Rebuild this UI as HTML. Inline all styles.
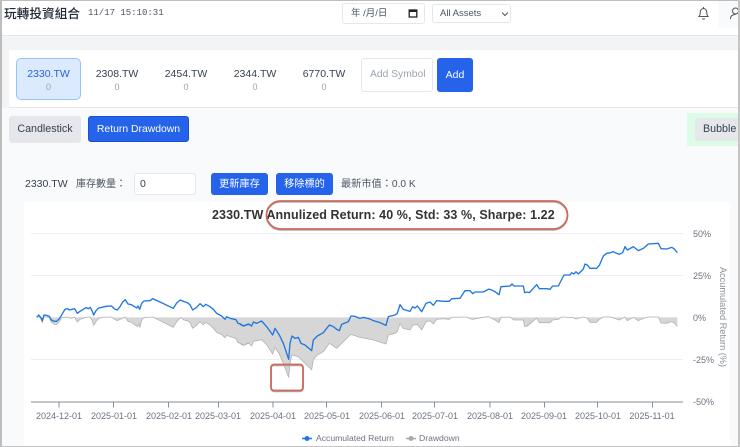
<!DOCTYPE html>
<html><head><meta charset="utf-8"><style>
*{box-sizing:border-box}
html,body{margin:0;padding:0}
body{width:740px;height:447px;position:relative;overflow:hidden;background:#f9fafb;font-family:"Liberation Sans","Noto Sans CJK TC",sans-serif;color:#374151}
.a{position:absolute;white-space:nowrap}
.btn{background:#2563eb;color:#fff;border-radius:3px;text-align:center;font-size:10.500px}
.sym{position:absolute;top:58px;width:64px;height:42px;text-align:center;font-size:10.500px;padding-top:10px;line-height:13px;color:#374151}
.sym small{display:block;font-size:9px;line-height:13px;color:#9ca3af}
.tk{font-size:9px;color:#6b7280;top:411px;transform:translateX(-50%)}
.yl{font-size:9px;line-height:11px;color:#6b7280;left:693px}
</style></head><body>
<div class="a" style="left:0;top:35px;width:740px;height:15px;background:#f3f4f6"></div>
<div class="a" style="left:0;top:50px;width:9px;height:58px;background:#f3f4f6"></div>
<div class="a" style="left:0;top:0;width:740px;height:36px;background:#fff;border-bottom:1px solid #e5e7eb"></div>
<div class="a" style="left:4px;top:4px;font-size:12.700px;line-height:20px;color:#1f2937;font-weight:500">玩轉投資組合</div>
<div class="a" style="left:88px;top:7px;font:9px/13px 'Liberation Mono',monospace;color:#4b5563">11/17 15:10:31</div>
<div class="a" style="left:342px;top:3px;width:83px;height:21px;background:#fff;border:1px solid #e5e7eb;border-radius:3px;font-size:9.500px;line-height:19px;padding-left:8px;color:#4b5563">年 /月/日</div>
<svg class="a" style="left:408px;top:8px" width="11" height="11" viewBox="0 0 11 11"><rect x="1.200" y="2" width="7.600" height="7" fill="none" stroke="#222" stroke-width="1.300"/><rect x="1" y="1.500" width="8" height="2.500" fill="#222"/></svg>
<div class="a" style="left:432px;top:4px;width:79px;height:19px;background:#fff;border:1px solid #e5e7eb;border-radius:3px;font-size:9.500px;line-height:17px;padding-left:7px;color:#4b5563">All Assets</div>
<svg class="a" style="left:501px;top:11px" width="8" height="6" viewBox="0 0 8 6"><path d="M1 1.500 4 4.500 7 1.500" fill="none" stroke="#4b5563" stroke-width="1"/></svg>
<svg class="a" style="left:697px;top:6px" width="13" height="15" viewBox="0 0 13 15"><path d="M2 10.500c1-1 1.200-2 1.200-4 0-2.200 1.300-4 3.300-4s3.300 1.800 3.300 4c0 2 .2 3 1.200 4zM5.200 12.500c.4.800 2.200.8 2.600 0M6.500 1v1.500" fill="none" stroke="#4b5563" stroke-width="1"/></svg>
<div class="a" style="left:718px;top:0;width:22px;height:28px;background:#f9fafb"></div>
<svg class="a" style="left:730px;top:6px" width="10" height="15" viewBox="0 0 10 15"><circle cx="5.500" cy="5" r="3" fill="none" stroke="#4b5563" stroke-width="1"/><path d="M0.500 13c0-3 2-4.500 5-4.500" fill="none" stroke="#4b5563" stroke-width="1"/></svg>

<div class="a" style="left:9px;top:50px;width:731px;height:58px;background:#fff;border-bottom:1px solid #e5e7eb"></div>
<div class="a" style="left:16px;top:58px;width:65px;height:42px;background:#dbeafe;border:1px solid #93c5fd;border-radius:5px"></div>
<div class="sym" style="left:16px;color:#2563eb;width:65px">2330.TW<small>0</small></div>
<div class="sym" style="left:85px">2308.TW<small>0</small></div>
<div class="sym" style="left:154px">2454.TW<small>0</small></div>
<div class="sym" style="left:223px">2344.TW<small>0</small></div>
<div class="sym" style="left:292px">6770.TW<small>0</small></div>
<div class="a" style="left:361px;top:58px;width:72px;height:34px;background:#fff;border:1px solid #e5e7eb;border-radius:3px;font-size:10.300px;line-height:32px;padding-left:8px;color:#9ca3af;overflow:hidden">Add Symbol</div>
<div class="a btn" style="left:437px;top:58px;width:36px;height:34px;line-height:34px">Add</div>

<div class="a" style="left:9px;top:116px;width:72px;height:27px;background:#e5e7eb;border-radius:3px;font-size:10.700px;line-height:27px;text-align:center;color:#374151">Candlestick</div>
<div class="a btn" style="left:88px;top:116px;width:101px;height:26px;line-height:26px;font-size:10.400px;border:1px solid #1d4ed8">Return Drawdown</div>
<div class="a" style="left:687px;top:113px;width:53px;height:33px;background:#dcfce7"></div>
<div class="a" style="left:695px;top:118px;width:45px;height:23px;background:#e5e7eb;border-radius:3px 0 0 3px;font-size:10.700px;line-height:23px;padding-left:8px;color:#374151">Bubble</div>

<div class="a" style="left:25px;top:177px;font-size:10.500px;line-height:14px;color:#374151">2330.TW</div>
<div class="a" style="left:76px;top:178px;font-size:10px;line-height:14px;color:#4b5563">庫存數量：</div>
<div class="a" style="left:134px;top:173px;width:62px;height:22px;background:#fff;border:1px solid #e5e7eb;border-radius:3px;font-size:10.500px;line-height:20px;padding-left:5px;color:#374151">0</div>
<div class="a btn" style="left:211px;top:173px;width:57px;height:22px;line-height:23px;font-size:10.200px">更新庫存</div>
<div class="a btn" style="left:276px;top:173px;width:57px;height:22px;line-height:23px;font-size:10.200px">移除標的</div>
<div class="a" style="left:341px;top:178px;font-size:10.200px;line-height:14px;color:#4b5563">最新市值：0.0 K</div>

<div class="a" style="left:24px;top:202px;width:706px;height:245px;background:#fff"></div>
<div class="a" style="left:212px;top:207px;font-size:12.500px;line-height:16px;font-weight:bold;color:#333;letter-spacing:.09px">2330.TW Annulized Return: 40 %, Std: 33 %, Sharpe: 1.22</div>

<svg class="a" style="left:0;top:0" width="740" height="447">
<g stroke="#eceef1" stroke-width="1"><path d="M31 233.500H683M31 275.500H683M31 359.500H683"/></g>
<path d="M31 402H683" stroke="#8a8f96" stroke-width="1"/>
<path d="M59 402v5.500M113.500 402v5.500M168.500 402v5.500M218.500 402v5.500M273 402v5.500M326.500 402v5.500M381.500 402v5.500M434.500 402v5.500M490 402v5.500M544.500 402v5.500M597.500 402v5.500M652.500 402v5.500" stroke="#8a8f96" stroke-width="1"/>
<g transform="translate(0,200) scale(.33333)" stroke-linejoin="round">
<polygon fill="#d6d6d6" points="110,352 116,350 122,355 127,368 132,350 148,352 154,367 163,373 170,373 178,365 186,352 206,352 212,355 224,352 232,366 240,358 258,352 270,351 276,360 281,376 288,365 296,355 306,352 334,351 344,358 352,362 360,358 376,351 384,364 394,367 404,374 412,380 416,372 420,382 425,360 432,353 458,351 480,362 520,382 530,365 541,353 552,360 562,362 570,368 578,385 590,376 600,365 610,374 617,367 630,375 640,385 650,397 665,404 675,413 680,406 708,416 714,428 722,430 730,436 745,430 750,430 750,352"/>
<polyline fill="none" stroke="#b4b4b4" stroke-width="2.500" points="110,352 116,350 122,355 127,368 132,350 148,352 154,367 163,373 170,373 178,365 186,352 206,352 212,355 224,352 232,366 240,358 258,352 270,351 276,360 281,376 288,365 296,355 306,352 334,351 344,358 352,362 360,358 376,351 384,364 394,367 404,374 412,380 416,372 420,382 425,360 432,353 458,351 480,362 520,382 530,365 541,353 552,360 562,362 570,368 578,385 590,376 600,365 610,374 617,367 630,375 640,385 650,397 665,404 675,413 680,406 708,416 714,428 722,430 730,436 745,430 750,430"/>
<polyline fill="none" stroke="#1f77e0" stroke-width="4" points="110,352 116,345 122,352 127,362 132,345 140,346 148,349 154,360 163,364 170,364 178,356 186,343 195,328 203,326 208,330 216,328 224,326 232,340 240,334 250,328 258,323 265,326 271,322 276,332 281,345 288,332 296,324 306,322 318,319 334,318 344,327 352,330 360,320 368,306 376,299 384,312 394,314 404,320 410,324 414,318 419,328 425,310 432,303 450,302 458,296 480,306 520,325 530,309 541,300 552,305 562,308 570,314 578,330 590,322 600,311 610,320 617,313 630,320 640,328 650,340 665,348 675,358 680,350 690,355 708,359 714,370 722,372 730,378 745,373 750,374"/>
</g>
<g transform="translate(240,200) scale(.33333)" stroke-linejoin="round">
<polygon fill="#d6d6d6" points="30,352 30,428 35,438 40,424 65,419 80,434 98,462 105,442 118,462 130,490 146,532 150,490 156,465 175,470 195,490 215,510 220,478 232,465 250,455 268,430 290,445 305,430 325,410 333,403 360,412 400,420 438,432 445,405 465,400 472,395 480,370 490,385 510,390 518,376 532,373 545,390 558,365 570,362 580,372 590,358 610,356 628,358 635,352 680,351 690,356 698,358 730,352 745,350 750,352"/>
<polyline fill="none" stroke="#b4b4b4" stroke-width="2.500" points="0,431 10,436 25,428 35,438 40,424 65,419 80,434 98,462 105,442 118,462 130,490 146,532 150,490 156,465 175,470 195,490 215,510 220,478 232,465 250,455 268,430 290,445 305,430 325,410 333,403 360,412 400,420 438,432 445,405 465,400 472,395 480,370 490,385 510,390 518,376 532,373 545,390 558,365 570,362 580,372 590,358 610,356 628,358 635,352 680,351 690,356 698,358 730,352 745,350 750,352"/>
<polyline fill="none" stroke="#1f77e0" stroke-width="4" points="0,373 10,378 25,372 35,378 40,366 50,370 65,363 80,380 98,405 105,385 118,405 130,430 146,478 150,430 156,408 165,415 175,412 183,430 195,435 215,452 220,420 232,408 250,398 268,375 280,380 290,388 298,392 305,373 325,365 333,348 345,349 360,355 370,352 390,357 400,362 420,368 438,376 445,350 465,345 472,340 480,314 490,328 510,334 518,320 525,324 532,318 545,335 558,310 570,306 580,316 590,302 610,304 628,304 635,296 660,295 675,272 690,272 698,281 705,276 730,276 745,268 750,268"/>
</g>
<g transform="translate(490,200) scale(.33333)" stroke-linejoin="round">
<polygon fill="#d6d6d6" points="0,352 15,360 27,368 33,352 60,351 72,360 100,360 104,380 112,378 140,354 148,368 180,368 188,360 205,358 215,351 250,353 258,357 280,351 292,355 300,367 320,367 328,358 340,351 362,351 388,360 405,351 412,362 430,352 445,362 460,355 475,351 505,351 513,369 530,370 545,365 552,368 562,380 562,352"/>
<polyline fill="none" stroke="#b4b4b4" stroke-width="2.500" points="0,352 15,360 27,368 33,352 60,351 72,360 100,360 104,380 112,378 140,354 148,368 180,368 188,360 205,358 215,351 250,353 258,357 280,351 292,355 300,367 320,367 328,358 340,351 362,351 388,360 405,351 412,362 430,352 445,362 460,355 475,351 505,351 513,369 530,370 545,365 552,368 562,380"/>
<polyline fill="none" stroke="#1f77e0" stroke-width="4" points="0,268 15,275 27,284 33,260 60,258 66,252 72,258 100,258 104,278 112,276 118,278 140,254 148,266 170,266 180,268 188,258 205,258 222,225 240,225 245,218 252,222 258,215 265,222 280,207 285,192 292,195 300,205 320,205 328,196 340,168 350,160 362,158 368,155 388,163 398,158 405,140 412,150 430,140 445,152 460,145 475,132 505,130 513,146 530,147 545,142 552,146 562,158"/>
</g>
<rect x="266.500" y="202" width="301" height="28" rx="14" fill="none" stroke="#b0b0b0" stroke-width="1.500"/>
<rect x="266.500" y="201" width="301" height="28" rx="14" fill="none" stroke="#cd6a5c" stroke-width="1.800"/>
<rect x="271" y="365.500" width="32" height="26" rx="3" fill="none" stroke="#b0b0b0" stroke-width="1.500"/>
<rect x="271" y="364.500" width="32" height="26" rx="3" fill="none" stroke="#cd6a5c" stroke-width="1.800"/>
<path d="M302 438.500h10" stroke="#1f77e0" stroke-width="1.500"/><circle cx="307" cy="438.500" r="2.500" fill="#1f77e0"/>
<path d="M406 438.500h10" stroke="#a9a9a9" stroke-width="1.500"/><circle cx="411" cy="438.500" r="2.500" fill="#a9a9a9"/>
<text x="0" y="0" text-anchor="middle" transform="translate(720,317) rotate(90)" font-family="Liberation Sans" font-size="9.200" fill="#8a8f96">Accumulated Return (%)</text>
</svg>
<div class="a tk" style="left:59px">2024-12-01</div>
<div class="a tk" style="left:114px">2025-01-01</div>
<div class="a tk" style="left:169px">2025-02-01</div>
<div class="a tk" style="left:218px">2025-03-01</div>
<div class="a tk" style="left:273px">2025-04-01</div>
<div class="a tk" style="left:327px">2025-05-01</div>
<div class="a tk" style="left:382px">2025-06-01</div>
<div class="a tk" style="left:435px">2025-07-01</div>
<div class="a tk" style="left:490px">2025-08-01</div>
<div class="a tk" style="left:544px">2025-09-01</div>
<div class="a tk" style="left:598px">2025-10-01</div>
<div class="a tk" style="left:652px">2025-11-01</div>
<div class="a yl" style="top:229px">50%</div>
<div class="a yl" style="top:271px">25%</div>
<div class="a yl" style="top:313px">0%</div>
<div class="a yl" style="top:355px">-25%</div>
<div class="a yl" style="top:397px">-50%</div>
<div class="a" style="left:316px;top:433px;font-size:8.600px;line-height:11px;color:#6b7280">Accumulated Return</div>
<div class="a" style="left:419px;top:433px;font-size:8.600px;line-height:11px;color:#6b7280">Drawdown</div>
<div class="a" style="left:0;top:0;width:740px;height:1px;background:#bdbdbd"></div>
<div class="a" style="left:0;top:0;width:2px;height:447px;background:#bdbdbd"></div>
<div class="a" style="left:738px;top:0;width:2px;height:447px;background:#c4c4c4"></div>
<div class="a" style="left:0;top:446px;width:740px;height:1px;background:#c4c4c4"></div>
</body></html>
